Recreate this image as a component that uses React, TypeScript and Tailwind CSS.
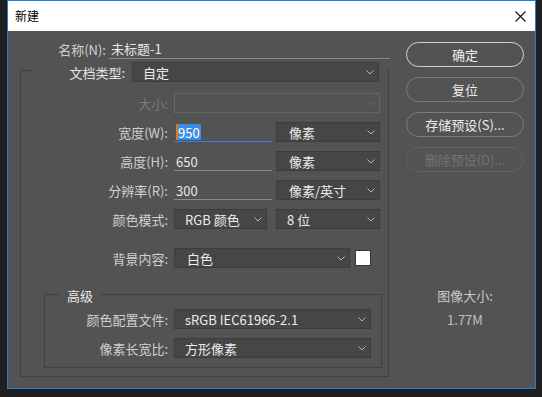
import type { ReactNode } from 'react';

const font = { fontFamily: '"Noto Sans CJK SC", "Noto Sans", sans-serif' };

function Chevron({ dim }: { dim?: boolean }) {
  return (
    <svg width="8" height="5" viewBox="0 0 8 5" className="shrink-0">
      <polyline
        points="0.5,0.5 4,4 7.5,0.5"
        fill="none"
        stroke={dim ? '#6a6a6a' : '#b8b8b8'}
        strokeWidth="1"
      />
    </svg>
  );
}

function Select({
  value,
  width,
  disabled,
  pad = 'pl-[10px]',
}: {
  value?: string;
  width: string;
  disabled?: boolean;
  pad?: string;
}) {
  return (
    <div
      className={`${width} ${pad} h-[20px] pr-[4px] flex items-center justify-between border ${
        disabled ? 'border-[#656565] bg-[#535353]' : 'border-[#3c3c3c] bg-[#464646]'
      }`}
    >
      <span className="text-[#ececec] leading-none">{value}</span>
      <Chevron dim={disabled} />
    </div>
  );
}

function Field({ value, focused }: { value: string; focused?: boolean }) {
  return (
    <div
      className={`w-[98px] h-[19px] mt-[1px] flex items-center pl-[2px] border-b ${
        focused ? 'border-[#2a82ea]' : 'border-[#8a8a8a]'
      }`}
    >
      {focused ? (
        <span className="flex items-center h-[16px] bg-[#3a8ee6] text-white leading-none border-l-2 border-[#e3791f] pr-[1px]">
          {value}
        </span>
      ) : (
        <span className="text-[#e6e6e6] leading-none">{value}</span>
      )}
    </div>
  );
}

function Row({
  label,
  children,
  labelWidth = 'w-[147px]',
  className = 'mt-[9px]',
  dim,
}: {
  label: string;
  children: ReactNode;
  labelWidth?: string;
  className?: string;
  dim?: boolean;
}) {
  return (
    <div className={`flex items-center h-[20px] ${className}`}>
      <span
        className={`${labelWidth} text-right leading-none ${dim ? 'text-[#7a7a7a]' : 'text-[#d0d0d0]'}`}
      >
        {label}
      </span>
      <div className="ml-[6px] flex items-center">{children}</div>
    </div>
  );
}

function Button({ label, primary, disabled }: { label: string; primary?: boolean; disabled?: boolean }) {
  return (
    <div
      className={`w-[118px] h-[25px] rounded-full border flex items-center justify-center leading-none ${
        primary
          ? 'border-[#d2d2d2] text-[#f0f0f0]'
          : disabled
          ? 'border-[#606060] text-[#747474]'
          : 'border-[#7c7c7c] text-[#ececec]'
      }`}
    >
      {label}
    </div>
  );
}

export default function App() {
  return (
    <div className="w-[542px] h-[397px] bg-[#1f1f1f] pl-[7px] text-[13px]" style={font}>
      <div className="w-[529px] h-[389px] border border-[#1b7fd6] flex flex-col">
        {/* Titre */}
        <div className="h-[30px] bg-white flex items-center justify-between pl-[7px] pr-[9px] shrink-0">
          <span className="text-[12px] text-black leading-none">新建</span>
          <svg width="11" height="11" viewBox="0 0 11 11">
            <path d="M0.5 0.5 L10.5 10.5 M10.5 0.5 L0.5 10.5" stroke="#111" strokeWidth="1.1" />
          </svg>
        </div>

        {/* Corps */}
        <div className="flex-1 bg-[#535353] flex">
          <div className="w-[382px]">
            <div className="flex items-center h-[20px] mt-[8px]">
              <span className="w-[98px] text-right text-[#d0d0d0] leading-none">名称(N):</span>
              <div className="ml-[3px] w-[281px] h-[19px] border-b border-[#8a8a8a] flex items-center pl-[2px] text-[#e6e6e6] leading-none">
                未标题-1
              </div>
            </div>

            {/* Groupe document */}
            <div className="ml-[12px] mt-[11px] w-[369px] h-[307px] border border-[#414141]">
              <div className="-mt-[9px] ml-[12px] w-[353px] h-[20px] bg-[#535353] flex items-center">
                <span className="w-[92px] text-right text-[#e4e4e4] leading-none">文档类型:</span>
                <div className="ml-[7px]">
                  <Select value="自定" width="w-[247px]" />
                </div>
              </div>

              <Row label="大小:" className="mt-[11px]" dim>
                <Select width="w-[206px]" disabled />
              </Row>
              <Row label="宽度(W):">
                <Field value="950" focused />
                <div className="ml-[4px]">
                  <Select value="像素" width="w-[104px]" pad="pl-[12px]" />
                </div>
              </Row>
              <Row label="高度(H):">
                <Field value="650" />
                <div className="ml-[4px]">
                  <Select value="像素" width="w-[104px]" pad="pl-[12px]" />
                </div>
              </Row>
              <Row label="分辨率(R):">
                <Field value="300" />
                <div className="ml-[4px]">
                  <Select value="像素/英寸" width="w-[104px]" pad="pl-[12px]" />
                </div>
              </Row>
              <Row label="颜色模式:">
                <Select value="RGB 颜色" width="w-[93px]" />
                <div className="ml-[9px]">
                  <Select value="8 位" width="w-[104px]" />
                </div>
              </Row>
              <Row label="背景内容:" className="mt-[19px]">
                <Select value="白色" width="w-[176px]" pad="pl-[12px]" />
                <div className="ml-[5px] w-[16px] h-[16px] bg-white border border-[#353535]" />
              </Row>

              {/* Groupe avancé */}
              <div className="ml-[23px] mt-[26px] w-[338px] h-[74px] border border-[#414141]">
                <div className="-mt-[9px] ml-[14px] w-fit h-[18px] px-[8px] bg-[#535353] flex items-center text-[#e8e8e8] leading-none">
                  高级
                </div>
                <Row label="颜色配置文件:" labelWidth="w-[123px]" className="mt-[5px]">
                  <Select value="sRGB IEC61966-2.1" width="w-[197px]" />
                </Row>
                <Row label="像素长宽比:" labelWidth="w-[123px]">
                  <Select value="方形像素" width="w-[197px]" />
                </Row>
              </div>
            </div>
          </div>

          {/* Boutons */}
          <div className="ml-[16px] mt-[11px] flex flex-col">
            <div className="flex flex-col gap-[10px]">
              <Button label="确定" primary />
              <Button label="复位" />
              <Button label="存储预设(S)..." />
              <Button label="删除预设(D)..." disabled />
            </div>
            <div className="mt-[116px] w-[118px] text-center text-[#c8c8c8] leading-[16px]">图像大小:</div>
            <div className="mt-[8px] w-[118px] text-center text-[#bcc2c8] leading-[16px]">1.77M</div>
          </div>
        </div>
      </div>
    </div>
  );
}
